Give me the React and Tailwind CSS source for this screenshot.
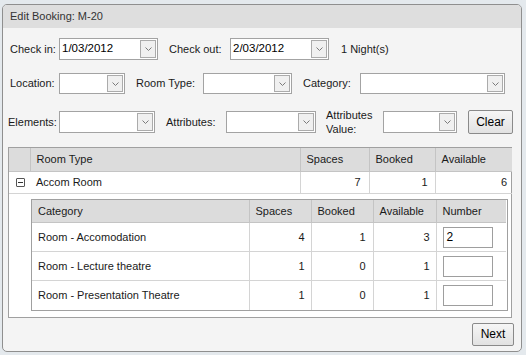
import React from 'react'

const Chevron = () => (
  <svg width="7" height="4" viewBox="0 0 7 4" className="block">
    <path d="M0.5 0.5 L3.5 3.5 L6.5 0.5" fill="none" stroke="#7a7a7a" strokeWidth="1" />
  </svg>
)

const Select = ({ width, value = '', height = 'h-[22px]' }) => (
  <div className={`shrink-0 flex items-stretch border border-[#a3a3a3] bg-white ${height} ${width}`}>
    <div className="flex-1 flex items-center pl-[2px] text-[11.5px] text-black overflow-hidden whitespace-nowrap">
      {value}
    </div>
    <div className="my-[1px] mr-[1px] w-[16px] border border-[#ababab] bg-[#f0f0f0] flex items-center justify-center">
      <Chevron />
    </div>
  </div>
)

const Label = ({ className = '', children }) => (
  <span className={`shrink-0 whitespace-nowrap ${className}`}>{children}</span>
)

const outerCols = [
  { label: 'Room Type', w: 'w-[270px]' },
  { label: 'Spaces', w: 'w-[69px]' },
  { label: 'Booked', w: 'w-[66px]' },
  { label: 'Available', w: 'w-[77px]' },
]

const categories = [
  { name: 'Room - Accomodation', spaces: 4, booked: 1, available: 3, number: '2' },
  { name: 'Room - Lecture theatre', spaces: 1, booked: 0, available: 1, number: '' },
  { name: 'Room - Presentation Theatre', spaces: 1, booked: 0, available: 1, number: '' },
]

export default function App() {
  return (
    <div
      className="w-[526px] h-[355px] bg-[#e4e9ed] pt-[4px] pl-[2px] text-[11px] text-[#1a1a1a]"
      style={{ fontFamily: '"Liberation Sans", Arial, sans-serif' }}
    >
      <div className="w-[520px] h-[348px] rounded-[5px] border border-[#8f8f8f] bg-[#f4f4f4] overflow-hidden flex flex-col">
        {/* Title */}
        <div className="h-[23px] bg-[#dedede] flex items-center pl-[7px] text-[#333]">
          Edit Booking: M-20
        </div>

        {/* Check in / out */}
        <div className="mt-[10px] h-[22px] flex items-center pl-[7px]">
          <Label className="w-[49px]">Check in:</Label>
          <Select width="w-[99px]" value="1/03/2012" />
          <Label className="ml-[11px] w-[61px]">Check out:</Label>
          <Select width="w-[99px]" value="2/03/2012" />
          <Label className="ml-[12px]">1 Night(s)</Label>
        </div>

        {/* Location / Room type / Category */}
        <div className="mt-[13px] h-[21px] flex items-center pl-[7px]">
          <Label className="w-[49px]">Location:</Label>
          <Select width="w-[66px]" height="h-[21px]" />
          <Label className="ml-[11px] w-[67px]">Room Type:</Label>
          <Select width="w-[89px]" height="h-[21px]" />
          <Label className="ml-[11px] w-[57px]">Category:</Label>
          <Select width="w-[145px]" height="h-[21px]" />
        </div>

        {/* Elements / Attributes */}
        <div className="mt-[16px] h-[24px] flex items-center pl-[5px]">
          <Label className="w-[51px]">Elements:</Label>
          <Select width="w-[96px]" />
          <Label className="ml-[11px] w-[60px]">Attributes:</Label>
          <Select width="w-[90px]" />
          <span className="shrink-0 ml-[10px] w-[57px] leading-[14px]">
            Attributes
            <br />
            Value:
          </span>
          <Select width="w-[74px]" />
          <button className="shrink-0 ml-[11px] w-[45px] h-[24px] border border-[#8a8a8a] rounded-[2px] bg-gradient-to-b from-[#f6f6f6] to-[#e2e2e2] text-[12px] text-black">
            Clear
          </button>
        </div>

        {/* Grid */}
        <div className="mt-[13px] ml-[5px] w-[504px] border border-[#a0a0a0] bg-white">
          <table className="table-fixed border-collapse w-[502px]">
            <thead>
              <tr className="h-[23px] bg-[#dcdcdc]">
                <th className="w-[21px] border-r border-b border-[#c4c4c4]" />
                {outerCols.map((c, i) => (
                  <th
                    key={c.label}
                    className={`${c.w} ${i < 3 ? 'border-r' : ''} border-b border-[#c4c4c4] text-left font-normal pl-[6px]`}
                  >
                    {c.label}
                  </th>
                ))}
              </tr>
            </thead>
            <tbody>
              <tr className="h-[22px]">
                <td className="border-b border-[#d4d4d4]">
                  <div className="ml-[7px] w-[9px] h-[9px] border border-[#555] rounded-[1px] flex items-center justify-center">
                    <div className="w-[5px] h-[1px] bg-[#333]" />
                  </div>
                </td>
                <td className="border-b border-[#d4d4d4] pl-[6px]">Accom Room</td>
                <td className="border-b border-l border-[#d4d4d4] text-right pr-[8px]">7</td>
                <td className="border-b border-l border-[#d4d4d4] text-right pr-[7px]">1</td>
                <td className="border-b border-l border-[#d4d4d4] text-right pr-[5px]">6</td>
              </tr>
              <tr>
                <td />
                <td colSpan={4} className="pt-[5px] pb-[6px] pr-[4px]">
                  <div className="ml-[1px] border border-[#a0a0a0]">
                    <table className="table-fixed border-collapse w-[474px]">
                      <thead>
                        <tr className="h-[23px] bg-[#dcdcdc]">
                          <th className="w-[217px] border-r border-b border-[#c4c4c4] text-left font-normal pl-[6px]">Category</th>
                          <th className="w-[62px] border-r border-b border-[#c4c4c4] text-left font-normal pl-[6px]">Spaces</th>
                          <th className="w-[62px] border-r border-b border-[#c4c4c4] text-left font-normal pl-[6px]">Booked</th>
                          <th className="w-[63px] border-r border-b border-[#c4c4c4] text-left font-normal pl-[6px]">Available</th>
                          <th className="w-[70px] border-b border-[#c4c4c4] text-left font-normal pl-[6px]">Number</th>
                        </tr>
                      </thead>
                      <tbody>
                        {categories.map((c, i) => (
                          <tr key={c.name} className="h-[29px]">
                            <td className={`${i < 2 ? 'border-b' : ''} border-r border-[#d4d4d4] pl-[6px]`}>{c.name}</td>
                            <td className={`${i < 2 ? 'border-b' : ''} border-r border-[#d4d4d4] text-right pr-[6px]`}>{c.spaces}</td>
                            <td className={`${i < 2 ? 'border-b' : ''} border-r border-[#d4d4d4] text-right pr-[7px]`}>{c.booked}</td>
                            <td className={`${i < 2 ? 'border-b' : ''} border-r border-[#d4d4d4] text-right pr-[6px]`}>{c.available}</td>
                            <td className={`${i < 2 ? 'border-b' : ''} border-[#d4d4d4] pl-[6px]`}>
                              <div className="w-[50px] h-[21px] border border-[#9e9e9e] bg-white flex items-center pl-[3px] text-[12px] text-black">
                                {c.number}
                              </div>
                            </td>
                          </tr>
                        ))}
                      </tbody>
                    </table>
                  </div>
                </td>
              </tr>
            </tbody>
          </table>
        </div>

        {/* Footer */}
        <div className="mt-[5px] flex justify-end pr-[7px]">
          <button className="w-[42px] h-[23px] border border-[#8a8a8a] rounded-[2px] bg-gradient-to-b from-[#f6f6f6] to-[#e2e2e2] text-[12px] text-black">
            Next
          </button>
        </div>
      </div>
    </div>
  )
}
